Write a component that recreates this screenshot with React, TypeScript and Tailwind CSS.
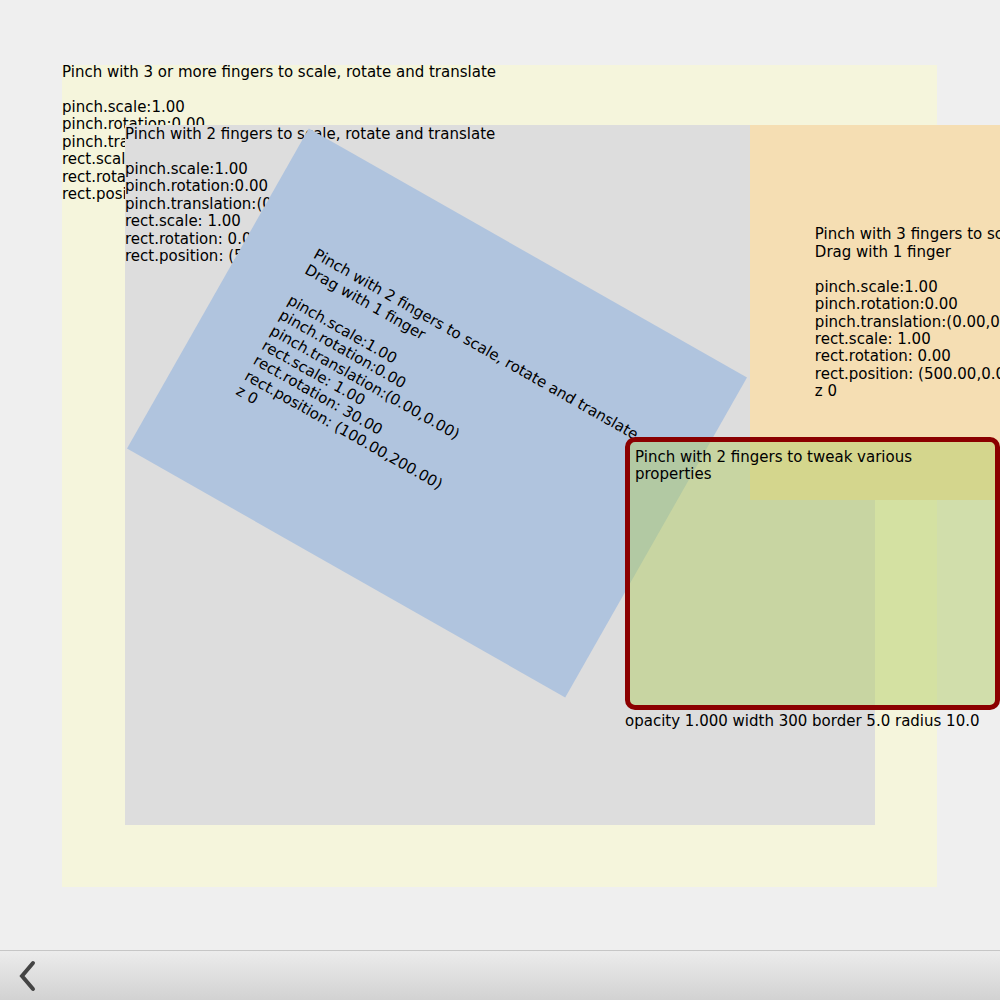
import React from "react";

const font = { fontFamily: "'DejaVu Sans', 'Liberation Sans', sans-serif" };

const yellowText = `Pinch with 3 or more fingers to scale, rotate and translate

pinch.scale:1.00
pinch.rotation:0.00
pinch.translation:(0.00,0.00)
rect.scale: 1.00
rect.rotation: 0.00
rect.position: (0.00,0.00)`;

const grayText = `Pinch with 2 fingers to scale, rotate and translate

pinch.scale:1.00
pinch.rotation:0.00
pinch.translation:(0.00,0.00)
rect.scale: 1.00
rect.rotation: 0.00
rect.position: (50.00,50.00)`;

const blueText = `Pinch with 2 fingers to scale, rotate and translate
Drag with 1 finger

pinch.scale:1.00
pinch.rotation:0.00
pinch.translation:(0.00,0.00)
rect.scale: 1.00
rect.rotation: 30.00
rect.position: (100.00,200.00)
z 0`;

const orangeText = `Pinch with 3 fingers to scale, rotate and translate
Drag with 1 finger

pinch.scale:1.00
pinch.rotation:0.00
pinch.translation:(0.00,0.00)
rect.scale: 1.00
rect.rotation: 0.00
rect.position: (500.00,0.00)
z 0`;

export default function App() {
  return (
    <div
      className="w-[1000px] h-[1000px] overflow-hidden flex flex-col bg-[#efefef] text-black text-[15px] leading-[17.45px]"
      style={font}
    >
      <div className="relative h-[950px] overflow-hidden">
        {/* outer yellow area */}
        <div className="absolute left-[62px] top-[65px] w-[875px] h-[822px] bg-[#f5f5dc]">
          <div className="whitespace-pre -mt-px">{yellowText}</div>
        </div>

        {/* gray area */}
        <div className="absolute left-[125px] top-[125px] w-[750px] h-[700px] bg-[#dddddd]">
          <div className="whitespace-pre mt-px">{grayText}</div>
        </div>

        {/* rotated blue rect */}
        <div className="absolute left-[185px] top-[229px] w-[504px] h-[368px] bg-[#b0c4de] rotate-[29.6deg] flex items-center justify-center">
          <div className="whitespace-pre mt-px">{blueText}</div>
        </div>

        {/* orange rect */}
        <div className="absolute left-[750px] top-[125px] w-[500px] h-[375px] bg-[#f5deb3] flex items-center justify-center">
          <div className="whitespace-pre mt-[2px]">{orangeText}</div>
        </div>

        {/* red bordered box */}
        <div className="absolute left-[625px] top-[437px] w-[375px] flex flex-col">
          <div className="h-[273px] border-[5px] border-[#8b0000] rounded-[10px] bg-[rgba(180,206,104,0.5)] pl-[5px] pt-[7px]">
            <div className="w-[300px]">Pinch with 2 fingers to tweak various properties</div>
          </div>
          <div className="pt-[3px] whitespace-pre">opacity 1.000 width 300 border 5.0 radius 10.0</div>
        </div>
      </div>

      {/* bottom toolbar */}
      <div className="h-[50px] border-t border-[#c6c6c6] bg-linear-to-b from-[#ececec] to-[#d2d2d2] flex items-center pl-[14px]">
        <svg width="26" height="32" viewBox="0 0 26 32" className="block">
          <path d="M19 3 L8 16 L19 29" fill="none" stroke="#444444" strokeWidth="4" strokeLinecap="round" strokeLinejoin="miter" />
        </svg>
      </div>
    </div>
  );
}
